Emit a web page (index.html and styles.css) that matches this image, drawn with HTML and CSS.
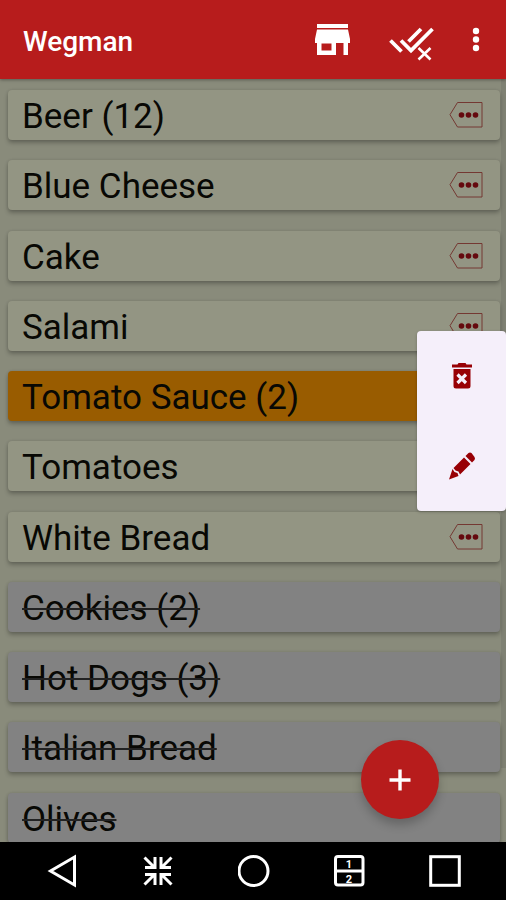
FILE: index.html
```
<!DOCTYPE html>
<html lang="en">
<head>
    <meta charset="UTF-8">
    <meta name="viewport" content="width=device-width, initial-scale=1.0">
    <title>Wegman</title>
    <link rel="stylesheet" href="styles.css">
</head>
<body>
    <svg class="defs">
        <symbol id="tag" viewBox="0 0 36 28">
            <path d="M9.5 1.5H34V26H9.5L2 13.7Z" fill="none" stroke="#743832" stroke-width="1"/>
            <g fill="#65090e">
                <circle cx="13.5" cy="14" r="2.8"/>
                <circle cx="20.5" cy="14" r="2.8"/>
                <circle cx="27.5" cy="14" r="2.8"/>
            </g>
        </symbol>
    </svg>

    <header class="toolbar">
        <h1>Wegman</h1>
        <svg class="store" width="36" height="32" viewBox="0 0 36 32" fill="#fff">
            <path d="M2 0H33V4H2Z"/>
            <path fill-rule="evenodd" d="M2 5.5H33L35 15V19H33V31H28.500V19H21V31H2V19H0V15ZM6.500 19.500V26.500H16.500V19.500Z"/>
        </svg>
        <svg class="checks" width="46" height="34" viewBox="0 0 46 34" fill="none" stroke="#fff" stroke-width="3.8">
            <path d="M1.500 13.500L12.500 24.500M12 13.500L22 23.500L43.500 2M19.500 14.500L32 2"/>
            <path d="M29.500 21L41.500 32.500M41.500 21L29.500 32.500" stroke-width="2.600"/>
        </svg>
        <svg class="more" width="8" height="26" viewBox="0 0 8 26" fill="#fff">
            <circle cx="4" cy="4" r="3.200"/>
            <circle cx="4" cy="12.500" r="3.200"/>
            <circle cx="4" cy="21" r="3.200"/>
        </svg>
    </header>

    <main class="list">
        <div class="item"><span>Beer (12)</span><svg class="tag"><use href="#tag"/></svg></div>
        <div class="item"><span>Blue Cheese</span><svg class="tag"><use href="#tag"/></svg></div>
        <div class="item"><span>Cake</span><svg class="tag"><use href="#tag"/></svg></div>
        <div class="item"><span>Salami</span><svg class="tag"><use href="#tag"/></svg></div>
        <div class="item selected"><span>Tomato Sauce (2)</span></div>
        <div class="item"><span>Tomatoes</span></div>
        <div class="item"><span>White Bread</span><svg class="tag"><use href="#tag"/></svg></div>
        <div class="item done"><span>Cookies (2)</span></div>
        <div class="item done"><span>Hot Dogs (3)</span></div>
        <div class="item done"><span>Italian Bread</span></div>
        <div class="item done"><span>Olives</span></div>
        <div class="scrollbar"></div>
    </main>

    <div class="popup">
        <svg width="20" height="26" viewBox="0 0 20 26">
            <path d="M0 1.500H5.500L6.500 0H13.500L14.500 1.500H20V4.500H0ZM1.500 6H18.500V23Q18.500 25.500 16 25.500H4Q1.500 25.500 1.500 23Z" fill="#980005"/>
            <path d="M5.500 11.500L14 20M14 11.500L5.500 20" stroke="#f5effa" stroke-width="3.200"/>
        </svg>
        <svg width="28" height="28" viewBox="0 0 28 28" fill="#980005">
            <path d="M17.500 4L20.500 1Q22 0 23.500 1L26.500 5Q27.500 6.500 26.500 8L24 10.500Z"/>
            <path d="M16 5.500L22.500 12L12 22.500L10.500 19.500L7.500 18.500L5.500 16Z"/>
            <path d="M4.500 17L6.500 20L9.500 21L10.500 24L1 27.500Z"/>
        </svg>
    </div>

    <button class="fab" aria-label="Add">
        <svg width="22" height="22" viewBox="0 0 22 22">
            <path d="M11 0.500V21.500M0.500 11H21.500" stroke="#fff" stroke-width="3.400"/>
        </svg>
    </button>

    <nav class="navbar">
        <svg width="32" height="34" viewBox="0 0 32 34"><path d="M27.500 3V31L3.500 17Z"/></svg>
        <svg width="32" height="34" viewBox="0 0 32 34">
            <path d="M1.500 3.500L11 13M2 13.500H12V3M28.500 3.500L19 13M28 13.500H18V3M1.500 30.500L11 21M2 20.500H12V31M28.500 30.500L19 21M28 20.500H18V31"/>
        </svg>
        <svg width="32" height="34" viewBox="0 0 32 34"><circle cx="15.500" cy="17" r="14.500"/></svg>
        <svg width="32" height="34" viewBox="0 0 32 34">
            <rect x="1.500" y="2.500" width="27.500" height="28.500" rx="2.500"/>
            <path d="M1.500 17H29"/>
            <text x="15" y="14">1</text>
            <text x="15" y="29">2</text>
        </svg>
        <svg width="32" height="34" viewBox="0 0 32 34"><rect x="1.700" y="2.700" width="28.600" height="28.600"/></svg>
    </nav>
</body>
</html>
```
FILE: styles.css
```
* {
    box-sizing: border-box;
}
body {
    margin: 0;
    height: 900px;
    display: flex;
    flex-direction: column;
    overflow: hidden;
    background-color: #898b7b;
    font-family: Roboto, sans-serif;
}
.defs {
    position: absolute;
    width: 0;
    height: 0;
}
.toolbar {
    flex: none;
    height: 79px;
    display: flex;
    align-items: flex-start;
    padding-left: 23px;
    background-color: #b71c1c;
    box-shadow: 0 1px 3px rgba(0, 0, 0, 0.35);
    color: #fff;
    z-index: 1;
}
.toolbar h1 {
    flex: none;
    width: 292px;
    margin: 25px 0 0;
    font-size: 28px;
    line-height: 34px;
    font-weight: 500;
}
.store {
    margin-top: 24px;
}
.checks {
    margin: 27px 0 0 38px;
}
.more {
    margin: 27px 0 0 37px;
}
.list {
    position: relative;
    flex: 1;
    min-height: 0;
    overflow: hidden;
    padding: 11px 6px 0 8px;
    display: flex;
    flex-direction: column;
    gap: 20.25px;
}
.item {
    flex: none;
    height: 50px;
    display: flex;
    align-items: flex-start;
    justify-content: space-between;
    padding: 2px 16px 0 14px;
    border-radius: 4px;
    background-color: #939583;
    box-shadow: 0 3px 4px rgba(0, 0, 0, 0.25), 0 0 3px rgba(0, 0, 0, 0.12);
    font-size: 35px;
    line-height: 50px;
    color: #080804;
}
.item.selected {
    background-color: #995c00;
}
.item.done {
    background-color: #828282;
}
.item.done span {
    text-decoration: line-through;
    text-decoration-color: #222;
    text-decoration-thickness: 2px;
}
.tag {
    width: 36px;
    height: 28px;
    margin-top: 9px;
}
.scrollbar {
    position: absolute;
    top: 0;
    right: 0;
    width: 5px;
    height: 689px;
    background-color: rgba(60, 60, 60, 0.12);
}
.popup {
    position: absolute;
    left: 417px;
    top: 331px;
    width: 89px;
    height: 180px;
    display: flex;
    flex-direction: column;
    align-items: center;
    justify-content: space-around;
    border-radius: 4px;
    background-color: #f5effa;
    box-shadow: 0 1px 3px rgba(0, 0, 0, 0.25);
}
.fab {
    position: absolute;
    left: 361px;
    top: 740px;
    width: 78px;
    height: 79px;
    display: flex;
    align-items: center;
    justify-content: center;
    padding: 0;
    border: none;
    border-radius: 50%;
    background-color: #b71c1c;
    box-shadow: 0 6px 10px rgba(0, 0, 0, 0.22);
}
.navbar {
    flex: none;
    height: 58px;
    display: flex;
    justify-content: space-between;
    align-items: center;
    padding: 0 45px 0 47px;
    background-color: #000;
    z-index: 1;
}
.navbar svg {
    fill: none;
    stroke: #fff;
    stroke-width: 3;
}
.navbar text {
    fill: #fff;
    stroke: none;
    font-size: 11px;
    font-weight: 700;
    text-anchor: middle;
}
```
